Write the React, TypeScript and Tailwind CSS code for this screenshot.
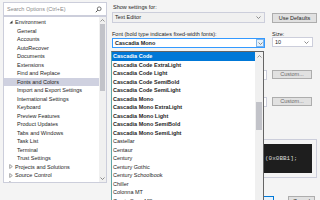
import React from "react";

const Chevron = ({ className = "" }: { className?: string }) => (
  <svg width="5" height="3" viewBox="0 0 5 3" className={className}>
    <polyline points="0.5,0.5 2.5,2.5 4.5,0.5" fill="none" stroke="#707070" strokeWidth="0.8" />
  </svg>
);

const Up = () => (
  <svg width="5" height="3" viewBox="0 0 5 3">
    <polyline points="0.5,2.5 2.5,0.5 4.5,2.5" fill="none" stroke="#808080" strokeWidth="0.8" />
  </svg>
);

const treeItems: { label: string; level: number; exp?: "open" | "closed"; sel?: boolean }[] = [
  { label: "Environment", level: 0, exp: "open" },
  { label: "General", level: 1 },
  { label: "Accounts", level: 1 },
  { label: "AutoRecover", level: 1 },
  { label: "Documents", level: 1 },
  { label: "Extensions", level: 1 },
  { label: "Find and Replace", level: 1 },
  { label: "Fonts and Colors", level: 1, sel: true },
  { label: "Import and Export Settings", level: 1 },
  { label: "International Settings", level: 1 },
  { label: "Keyboard", level: 1 },
  { label: "Preview Features", level: 1 },
  { label: "Product Updates", level: 1 },
  { label: "Tabs and Windows", level: 1 },
  { label: "Task List", level: 1 },
  { label: "Terminal", level: 1 },
  { label: "Trust Settings", level: 1 },
  { label: "Projects and Solutions", level: 0, exp: "closed" },
  { label: "Source Control", level: 0, exp: "closed" },
  { label: "Work Items", level: 0, exp: "closed" },
];

const fonts: { name: string; bold: boolean }[] = [
  { name: "Cascadia Code", bold: true },
  { name: "Cascadia Code ExtraLight", bold: true },
  { name: "Cascadia Code Light", bold: true },
  { name: "Cascadia Code SemiBold", bold: true },
  { name: "Cascadia Code SemiLight", bold: true },
  { name: "Cascadia Mono", bold: true },
  { name: "Cascadia Mono ExtraLight", bold: true },
  { name: "Cascadia Mono Light", bold: true },
  { name: "Cascadia Mono SemiBold", bold: true },
  { name: "Cascadia Mono SemiLight", bold: true },
  { name: "Castellar", bold: false },
  { name: "Centaur", bold: false },
  { name: "Century", bold: false },
  { name: "Century Gothic", bold: false },
  { name: "Century Schoolbook", bold: false },
  { name: "Chiller", bold: false },
  { name: "Colonna MT", bold: false },
  { name: "Comic Sans MS", bold: false },
];

export default function App() {
  return (
    <div
      className="w-[320px] h-[200px] overflow-hidden bg-[#f4f4f4] flex text-[5.5px] text-[#1e1e1e] relative"
      style={{ fontFamily: '"Liberation Sans", Arial, sans-serif' }}
    >
      {/* Left column */}
      <div className="w-[107px] shrink-0 pl-[3px] pt-[2px] flex flex-col">
        <div className="h-[14px] bg-white border border-[#cccedb] flex items-center pl-[3px] pr-[4px]">
          <span className="flex-1 text-[#8a8a8a]">Search Options (Ctrl+E)</span>
          <svg width="7" height="7" viewBox="0 0 7 7">
            <circle cx="4.2" cy="2.8" r="1.9" fill="none" stroke="#555" strokeWidth="0.8" />
            <line x1="2.8" y1="4.2" x2="0.8" y2="6.2" stroke="#555" strokeWidth="1" />
          </svg>
        </div>
        <div className="h-[167px] bg-white border border-[#cccedb] flex overflow-hidden">
          <div className="flex-1 pt-[1px] flex flex-col">
            {treeItems.map((it) => (
              <div
                key={it.label}
                className={`h-[8.5px] leading-[8.5px] shrink-0 flex items-center whitespace-nowrap ${
                  it.sel ? "bg-[#cfd1e0]" : ""
                } ${it.level === 0 ? "pl-[2px]" : "pl-[13px]"}`}
              >
                {it.level === 0 && (
                  <span className="w-[9px] flex justify-center">
                    {it.exp === "open" ? (
                      <svg width="4" height="4" viewBox="0 0 4 4">
                        <polygon points="3.5,0.5 3.5,3.5 0.5,3.5" fill="#333" />
                      </svg>
                    ) : (
                      <svg width="4" height="5" viewBox="0 0 4 5">
                        <polygon points="0.7,0.5 3.3,2.5 0.7,4.5" fill="none" stroke="#666" strokeWidth="0.6" />
                      </svg>
                    )}
                  </span>
                )}
                <span>{it.label}</span>
              </div>
            ))}
          </div>
          <div className="w-[7px] bg-[#f0f0f0] flex flex-col items-center">
            <div className="h-[6px] flex items-center">
              <Up />
            </div>
            <div className="w-[5px] h-[67px] bg-[#c2c3c9] mt-[1px]" />
            <div className="flex-1" />
            <div className="h-[8px] flex items-center">
              <Chevron />
            </div>
          </div>
        </div>
      </div>

      {/* Right column */}
      <div className="flex-1 pl-[5px] pt-[4px] flex flex-col">
        <div className="h-[7px] leading-[7px] pl-[1px]">Show settings for:</div>
        <div className="flex gap-[7px] mt-[1px] items-start">
          <div className="w-[153px] h-[11px] border border-[#cccedb] bg-[#f0f0f0] flex items-center pl-[2px] pr-[3px]">
            <span className="flex-1">Text Editor</span>
            <Chevron />
          </div>
          <div className="w-[45px] h-[10px] mt-[1px] border border-[#adadad] bg-[#e1e1e1] flex items-center justify-center">
            Use Defaults
          </div>
        </div>
        <div className="flex gap-[7px] mt-[8px]">
          <div className="w-[153px] h-[7px] leading-[7px]">Font (bold type indicates fixed-width fonts):</div>
          <div className="h-[7px] leading-[7px]">Size:</div>
        </div>
        <div className="flex gap-[7px] mt-[-1px]">
          <div className="w-[153px] h-[10px] mt-[1px] border border-[#3399ff] bg-white flex items-center pl-[2px]">
            <span className="flex-1 font-bold">Cascadia Mono</span>
            <div className="w-[8px] h-[8px] border border-[#7eb4ea] bg-[#e5f1fb] flex items-center justify-center">
              <Chevron />
            </div>
          </div>
          <div className="w-[41px] h-[10px] border border-[#cccedb] bg-white flex items-center pl-[2px] pr-[3px]">
            <span className="flex-1">10</span>
            <Chevron />
          </div>
        </div>
        {/* Content behind the open list */}
        <div className="flex gap-[5px] mt-[21px]">
          <div className="w-[155px] flex flex-col">
            <div className="h-[10px] mt-[1px] border border-[#cccedb] bg-white" />
            <div className="h-[17px]" />
            <div className="h-[10px] border border-[#cccedb] bg-white" />
          </div>
          <div className="flex flex-col">
            <div className="h-[9px] w-[40px] mt-[1px] border border-[#adadad] bg-[#e1e1e1] flex items-center justify-center text-[#6d6d6d]">
              Custom...
            </div>
            <div className="h-[18px]" />
            <div className="h-[9px] w-[40px] border border-[#adadad] bg-[#e1e1e1] flex items-center justify-center text-[#6d6d6d]">
              Custom...
            </div>
          </div>
        </div>
        <div className="flex mt-[32px] h-[40px] w-[205px] border border-[#cccedb] items-center p-[4px]">
          <div className="h-[29px] w-full bg-[#1e1e1e] flex items-center pl-[148px]">
            <span className="text-[#dcdcdc] text-[6px]" style={{ fontFamily: '"Liberation Mono", monospace' }}>
              (0x0BB1];
            </span>
          </div>
        </div>
        <div className="flex justify-end gap-[14px] mt-[18px] pr-[5px]">
          <div className="w-[36px] h-[10px] border border-[#0078d7] bg-[#e5f1fb] flex items-center justify-center">OK</div>
          <div className="w-[27px] h-[10px] border border-[#adadad] bg-[#e1e1e1] flex items-center justify-center">Cancel</div>
        </div>
      </div>

      {/* Open dropdown list */}
      <div className="absolute left-[111px] top-[51px] w-[153px] h-[152px] bg-white border border-[#646464] border-l-[#5fa6a6] flex">
        <div className="flex-1 flex flex-col">
          {fonts.map((f, i) => (
            <div
              key={f.name}
              className={`h-[8.5px] leading-[8.5px] shrink-0 pl-[1px] whitespace-nowrap ${
                i === 0 ? "bg-[#0078d7] text-white" : ""
              } ${f.bold ? "font-bold" : ""}`}
            >
              {f.name}
            </div>
          ))}
        </div>
        <div className="w-[8px] bg-[#f0f0f0] flex flex-col items-center">
          <div className="h-[8px] flex items-center">
            <Up />
          </div>
          <div className="w-[6px] h-[28px] bg-[#c2c3c9] mt-[42px]" />
        </div>
      </div>
    </div>
  );
}
